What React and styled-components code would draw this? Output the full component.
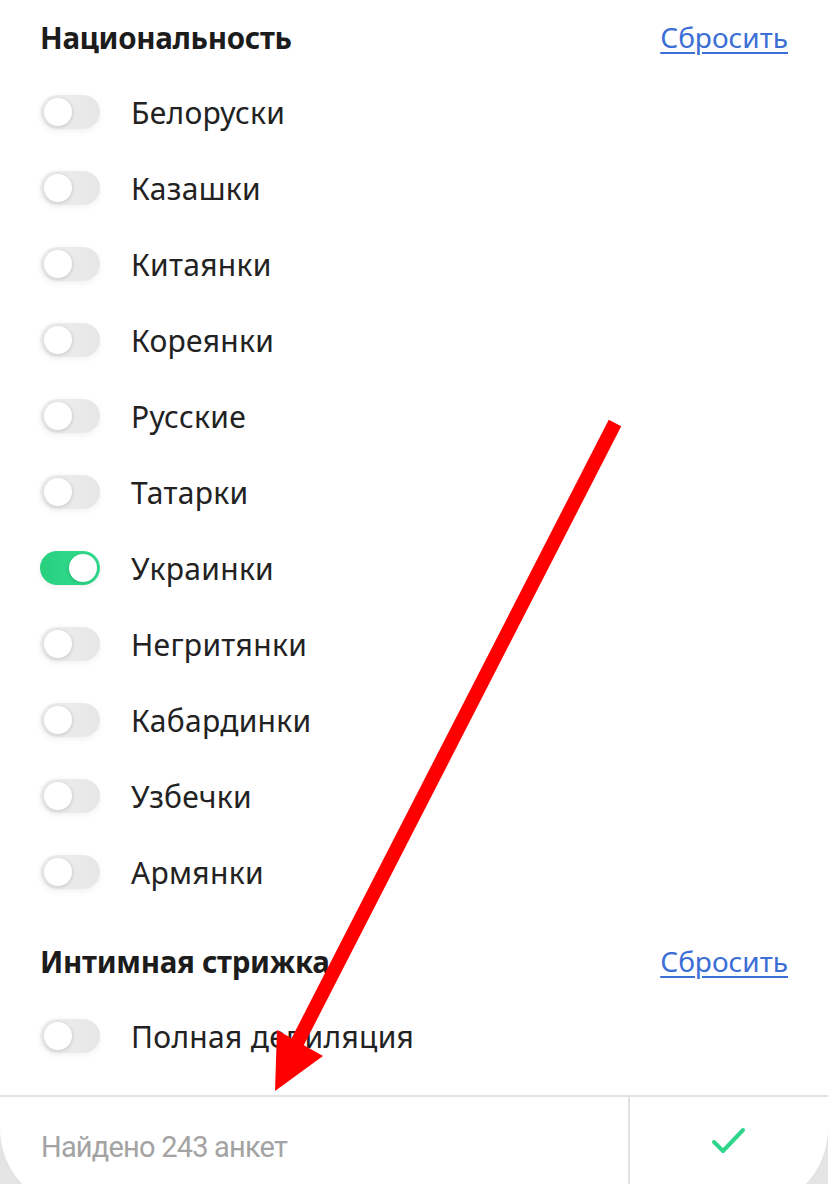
import React from 'react';
import styled, { createGlobalStyle } from 'styled-components';

const Global = createGlobalStyle`
  html, body {
    margin: 0;
    padding: 0;
    background: #e4e4e4;
    overflow: hidden;
  }
  body {
    font-family: "Noto Sans", "Open Sans", sans-serif;
    color: #1f1f1f;
  }
`

const Page = styled.div`
  position: relative;
  width: 828px;
  height: 1210px;
  display: flex;
  flex-direction: column;
  background: #fff;
  border-radius: 0 0 82px 82px;
  overflow: hidden;
`

const Content = styled.div`
  flex: 1;
  padding: 0 40px;
`

const Section = styled.section`
  margin-top: ${p => p.$top || 0}px;
`

const HeadRow = styled.div`
  height: 74px;
  display: flex;
  align-items: center;
  justify-content: space-between;
`

const Title = styled.h2`
  margin: 0;
  font-size: 29.5px;
  font-weight: 700;
  letter-spacing: -0.3px;
  color: #1c1c1c;
`

const Reset = styled.a`
  font-size: 28px;
  color: #3b6fd6;
  text-decoration: underline;
  text-underline-offset: 4px;
  text-decoration-thickness: 2px;
  cursor: pointer;
`

const Row = styled.div`
  height: 76px;
  display: flex;
  align-items: center;
  gap: 31px;
`

const Track = styled.div`
  position: relative;
  width: 60px;
  height: 34px;
  border-radius: 17px;
  flex-shrink: 0;
  background: ${p => p.$on ? 'linear-gradient(90deg, #28d07f, #31df8e)' : 'linear-gradient(90deg, #f0f0f0, #e6e6e6)'};
  box-shadow: 0 2px 6px rgba(0, 0, 0, 0.06);
`

const Knob = styled.div`
  position: absolute;
  top: 3px;
  left: ${p => p.$on ? '29px' : '4px'};
  width: 28px;
  height: 28px;
  border-radius: 50%;
  background: #fff;
  box-shadow: 0 1px 4px rgba(0, 0, 0, 0.18);
`

const Label = styled.span`
  font-size: 30px;
  color: #222;
  letter-spacing: 0.3px;
`

const Footer = styled.div`
  margin-top: 21px;
  height: 115px;
  display: flex;
  border-top: 2px solid #e2e2e2;
`

const Found = styled.div`
  flex: 1;
  display: flex;
  align-items: flex-start;
  padding: 33px 0 0 41px;
  font-family: "Roboto", sans-serif;
  font-size: 29px;
  color: #a3a3a3;
  letter-spacing: -0.8px;
  border-right: 2px solid #e2e2e2;
`

const Confirm = styled.div`
  width: 198px;
  display: flex;
  justify-content: center;
  padding-top: 30px;
  align-items: flex-start;
`

const Arrow = styled.svg`
  position: absolute;
  left: 0;
  top: 0;
  pointer-events: none;
`

const nations = [
  'Белоруски', 'Казашки', 'Китаянки', 'Кореянки', 'Русские', 'Татарки',
  'Украинки', 'Негритянки', 'Кабардинки', 'Узбечки', 'Армянки',
]

function Toggle({ on }) {
  return (
    <Track $on={on}>
      <Knob $on={on} />
    </Track>
  );
}

export default function App() {
  return (
    <Page>
      <Global />
      <Content>
        <Section>
          <HeadRow>
            <Title>Национальность</Title>
            <Reset>Сбросить</Reset>
          </HeadRow>
          {nations.map(n => (
            <Row key={n}>
              <Toggle on={n === 'Украинки'} />
              <Label>{n}</Label>
            </Row>
          ))}
        </Section>
        <Section $top={14}>
          <HeadRow>
            <Title>Интимная стрижка</Title>
            <Reset>Сбросить</Reset>
          </HeadRow>
          <Row>
            <Toggle />
            <Label>Полная депиляция</Label>
          </Row>
        </Section>
      </Content>
      <Footer>
        <Found>Найдено 243 анкет</Found>
        <Confirm>
          <svg width="36" height="30" viewBox="0 0 36 30">
            <path d="M3 15 L12 24 L32 3" fill="none" stroke="#2ed58a" strokeWidth="4" strokeLinecap="round" strokeLinejoin="round" />
          </svg>
        </Confirm>
      </Footer>
      <Arrow width="828" height="1184" viewBox="0 0 828 1184">
        <line x1="615" y1="423" x2="296" y2="1045" stroke="#ff0000" strokeWidth="14" />
        <polygon points="277,1030 323,1056 275,1091" fill="#ff0000" />
      </Arrow>
    </Page>
  );
}
